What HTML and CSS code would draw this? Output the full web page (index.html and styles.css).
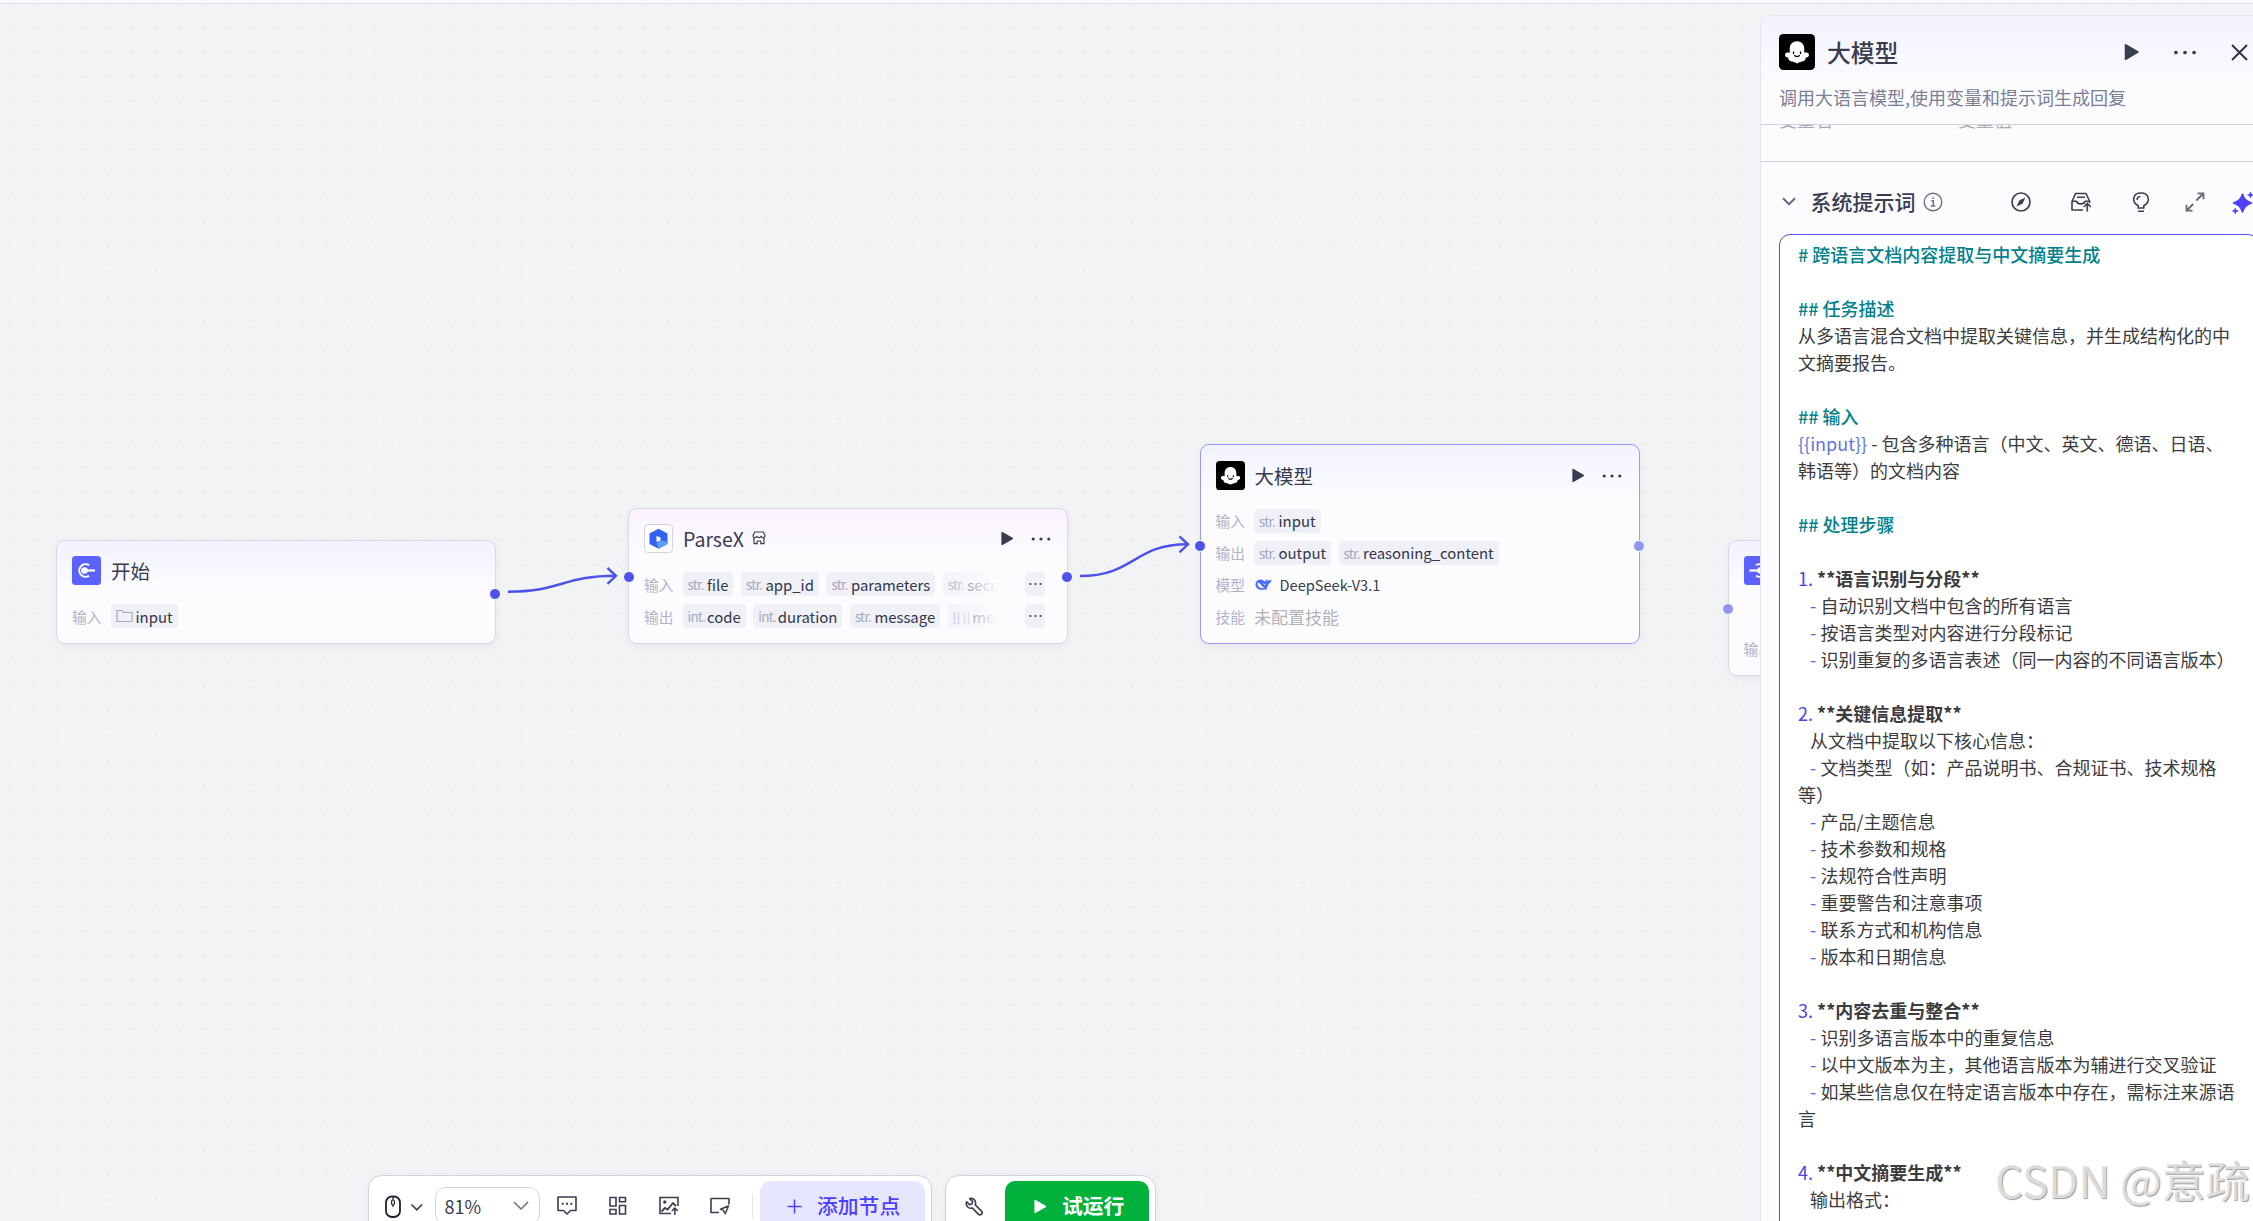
FILE: index.html
```html
<!DOCTYPE html>
<html lang="zh-CN">
<head>
    <meta charset="UTF-8">
    <title>工作流</title>
    <link rel="stylesheet" href="styles.css">
</head>
<body>
    <!-- shared icons -->
    <svg class="icon-defs" width="0" height="0">
        <symbol id="ghost" viewBox="0 0 36 36">
            <rect width="36" height="36" rx="4.5" fill="#000"/>
            <path d="M18 7.300c-4.500 0-7.300 3.300-7.300 7.600v4c-1.500-.6-3.800-.4-4.500 1-.7 1.700.6 3.600 2.900 3.700.2 2.700 1.900 4.200 4.300 3.700.8 1.300 1.600 1 2.600.6.600 1 1.200 1.300 2 1.300s1.400-.3 2-1.300c1 .4 1.800.7 2.600-.6 2.400.5 4.100-1 4.300-3.700 2.300-.1 3.600-2 2.900-3.700-.7-1.400-3-1.600-4.500-1v-4c0-4.300-2.800-7.600-7.300-7.600z" fill="#fff"/>
            <path d="M14.500 18v1.500M21.500 18v1.500M15.700 21.500c1.200 1.600 3.400 1.600 4.600 0" fill="none" stroke="#000" stroke-width="1.300" stroke-linecap="round"/>
        </symbol>
        <symbol id="play" viewBox="0 0 14 16">
            <path d="M1 1.600v12.800c0 .6.600 1 1.200.6l10.800-6.300c.6-.4.6-1 0-1.400L2.200 1C1.600.6 1 1 1 1.600z" fill="currentColor"/>
        </symbol>
        <symbol id="more" viewBox="0 0 20 6">
            <circle cx="2.200" cy="3" r="1.600" fill="currentColor"/>
            <circle cx="10" cy="3" r="1.600" fill="currentColor"/>
            <circle cx="17.800" cy="3" r="1.600" fill="currentColor"/>
        </symbol>
    </svg>

    <div class="canvas">
        <svg class="lines" width="1760" height="1221">
            <path d="M508 591.700C562 591.700 562 575.800 616 575.800"/>
            <path d="M607.500 568l8.500 7.800l-8.500 8"/>
            <path d="M1080 576C1134 576 1134 544.300 1187.500 544.300"/>
            <path d="M1179.500 536.300l8.500 8l-8.500 8"/>
        </svg>

        <div class="node start-node">
            <div class="node-head">
                <svg class="node-icon" viewBox="0 0 29 29">
                    <rect width="29" height="29" rx="3.500" fill="#5c62ff"/>
                    <path d="M17 9.200a6.300 6.300 0 1 0 0 10.600" fill="none" stroke="#fff" stroke-width="2"/>
                    <circle cx="12.500" cy="14.500" r="3.300" fill="#fff"/>
                    <path d="M12 14.500h11" stroke="#fff" stroke-width="2.200"/>
                </svg>
                <span class="node-title">开始</span>
            </div>
            <div class="row">
                <span class="label">输入</span>
                <span class="chip">
                    <svg class="folder" viewBox="0 0 17 14"><path d="M1 12.500V1.500h5l1.500 2H16v9z" fill="none" stroke="#a5a9c0" stroke-width="1.200"/></svg>input
                </span>
            </div>
            <i class="port out"></i>
        </div>

        <div class="node plugin-node">
            <div class="node-head">
                <svg class="node-icon" viewBox="0 0 29 29">
                    <rect x=".5" y=".5" width="28" height="28" rx="3.500" fill="#fff" stroke="#cfd4e6"/>
                    <path d="M14.500 4.800l9 4.700v10.500l-9 4.700l-9-4.700V9.500z" fill="#2f62f5"/>
                    <path d="M14.500 24.700l-2-5.200 4-3.200 7 1.500v2.200z" fill="#5b9ff8"/>
                    <path d="M12.500 12l4 1.500v3l-4 1.500z" fill="#fff"/>
                </svg>
                <span class="node-title">ParseX</span>
                <svg class="store" viewBox="0 0 14 14"><path d="M2.700 1h8.600L13 4.800c0 2.200-3 2.400-4 .5-.8 1.700-3.200 1.700-4 0-1 1.900-4 1.700-4-.5zM2 7v5.700h3.200V10h3.600v2.700H12V7" fill="none" stroke="#3a3f50" stroke-width="1.200" stroke-linejoin="round"/></svg>
                <span class="tools">
                    <svg class="play"><use href="#play"/></svg>
                    <svg class="more"><use href="#more"/></svg>
                </span>
            </div>
            <div class="row">
                <span class="label">输入</span>
                <span class="chip"><em>str.</em>file</span>
                <span class="chip"><em>str.</em>app_id</span>
                <span class="chip"><em>str.</em>parameters</span>
                <span class="chip"><em>str.</em>secret_code</span>
                <span class="fade"><b><svg><use href="#more"/></svg></b></span>
            </div>
            <div class="row">
                <span class="label">输出</span>
                <span class="chip"><em>int.</em>code</span>
                <span class="chip"><em>int.</em>duration</span>
                <span class="chip"><em>str.</em>message</span>
                <span class="chip"><em class="obj">[{ }]</em>metrics</span>
                <span class="fade"><b><svg><use href="#more"/></svg></b></span>
            </div>
            <i class="port in"></i>
            <i class="port out"></i>
        </div>

        <div class="node llm-node">
            <div class="node-head">
                <svg class="node-icon"><use href="#ghost"/></svg>
                <span class="node-title">大模型</span>
                <span class="tools">
                    <svg class="play"><use href="#play"/></svg>
                    <svg class="more"><use href="#more"/></svg>
                </span>
            </div>
            <div class="row">
                <span class="label">输入</span>
                <span class="chip"><em>str.</em>input</span>
            </div>
            <div class="row">
                <span class="label">输出</span>
                <span class="chip"><em>str.</em>output</span>
                <span class="chip"><em>str.</em>reasoning_content</span>
            </div>
            <div class="row">
                <span class="label">模型</span>
                <svg class="whale" viewBox="0 0 17 13">
                    <path d="M.5 6C.8 2.800 3.500 1 6.200 1.500c1.700.3 2.600 1.300 4.200 2.300.5-.5.3-1.700.4-2.800.8.3 1 1.200 1.700 1.500 1.200.3 2.600-.1 3.900-.9.100 2-1 3.800-3 4.300-.1 2-1 3.600-2.300 4.600l1.200 1c-1 .6-2 .3-2.800-.2C5.500 13 .2 11 .5 6z" fill="#4d6bfe"/>
                    <path d="M2.800 4.800c2.600.2 3.500 3.700 6 5.200-3.800.6-6.300-1.800-6-5.200zM8 5.500c1.200 0 2.100.9 2.200 2.100" fill="#fbfbff" stroke="#fbfbff" stroke-width=".4"/>
                </svg>
                <span class="model-name">DeepSeek-V3.1</span>
            </div>
            <div class="row">
                <span class="label">技能</span>
                <span class="empty">未配置技能</span>
            </div>
            <i class="port in"></i>
            <i class="port out idle"></i>
        </div>

        <div class="node end-node">
            <div class="node-head">
                <svg class="node-icon" viewBox="0 0 29 29">
                    <rect width="29" height="29" rx="3.500" fill="#5c62ff"/>
                    <path d="M12 9.200a6.300 6.300 0 1 1 0 10.600" fill="none" stroke="#fff" stroke-width="2"/>
                    <circle cx="16.500" cy="14.500" r="3.300" fill="#fff"/>
                    <path d="M5.500 14.500h11" stroke="#fff" stroke-width="2.200"/>
                </svg>
            </div>
            <div class="row"></div>
            <div class="row">
                <span class="label">输出</span>
            </div>
            <i class="port in idle"></i>
        </div>
    </div>

    <div class="toolbar">
        <div class="bar main-bar">
            <svg class="mouse" viewBox="0 0 39 24" width="39" height="24">
                <rect x="1" y="1.500" width="14" height="20.500" rx="6" fill="none" stroke="#1f2430" stroke-width="1.800"/>
                <path d="M8 2v3M8 10v2" stroke="#1f2430" stroke-width="1.200"/>
                <rect x="6.600" y="5" width="2.800" height="5" rx="1.400" fill="#fff" stroke="#1f2430" stroke-width="1.200"/>
                <path d="M26.500 9.500l5.300 5.300l5.300-5.300" fill="none" stroke="#3a3f50" stroke-width="1.700"/>
            </svg>
            <div class="zoom-select">
                <span>81%</span>
                <svg width="16" height="10" viewBox="0 0 16 10"><path d="M1 1l7 7l7-7" fill="none" stroke="#6b7087" stroke-width="1.500"/></svg>
            </div>
            <svg class="bar-icon" viewBox="0 0 20 20">
                <path d="M1 1h18v13.500h-5.500L10 18l-3.500-3.500H1z" fill="none" stroke="#3a3f50" stroke-width="1.600" stroke-linejoin="round"/>
                <path d="M4.700 6.700h2v2h-2zM9 6.700h2v2H9zM13.300 6.700h2v2h-2z" fill="#3a3f50"/>
            </svg>
            <svg class="bar-icon" viewBox="0 0 20 20">
                <path d="M2 1.500h6v8.500H2zM11.500 1.500h6v4.300h-6zM2 13.500h6V18H2zM11.500 9.500h6V18h-6z" fill="none" stroke="#3a3f50" stroke-width="1.600"/>
            </svg>
            <svg class="bar-icon" viewBox="0 0 20 20">
                <path d="M12 17.500H1V1.500h18V10" fill="none" stroke="#3a3f50" stroke-width="1.600"/>
                <circle cx="5.800" cy="6" r="1.700" fill="#3a3f50"/>
                <path d="M2.500 15.500l3.500-3.500 2.500 1.500 5.500-6.500 3 3" fill="none" stroke="#3a3f50" stroke-width="1.800"/>
                <path d="M15.800 19v-6.500M12.800 15l3-3 3 3" fill="none" stroke="#3a3f50" stroke-width="1.500"/>
            </svg>
            <svg class="bar-icon" viewBox="0 0 20 20">
                <path d="M9 16.500H1V2.500h18v6" fill="none" stroke="#3a3f50" stroke-width="1.600" stroke-linejoin="round"/>
                <path d="M18.500 10l-8 3.200 3 1.500 1.700 3z" fill="none" stroke="#3a3f50" stroke-width="1.500" stroke-linejoin="round"/>
            </svg>
            <span class="split"></span>
            <div class="add-btn">
                <svg width="15" height="15" viewBox="0 0 15 15"><path d="M7.500 0.500v14M0.500 7.500h14" stroke="#4d40ff" stroke-width="1.500"/></svg>
                <span>添加节点</span>
            </div>
        </div>
        <div class="bar run-bar">
            <svg class="wrench" viewBox="0 0 20 20">
                <path d="M5 1.700l3 3-.7 2.600-2.600.7-3-3c-1.500 4 2 7.800 5.800 6.500l7 7c2 1.200 4.500-1.200 3.300-3.200l-7-7C12.200 4.200 9 .5 5 1.700z" fill="none" stroke="#3a3f50" stroke-width="1.700" stroke-linejoin="round"/>
            </svg>
            <div class="run-btn">
                <svg class="play"><use href="#play"/></svg>
                <span>试运行</span>
            </div>
        </div>
    </div>

    <div class="panel">
        <div class="panel-head">
            <div class="panel-title">
                <svg class="panel-logo"><use href="#ghost"/></svg>
                <span>大模型</span>
                <svg class="panel-play"><use href="#play"/></svg>
                <svg class="panel-more"><use href="#more"/></svg>
                <svg class="close" viewBox="0 0 17 17"><path d="M1 1l15 15M16 1L1 16" stroke="#2e3241" stroke-width="1.900"/></svg>
            </div>
            <div class="panel-desc">调用大语言模型,使用变量和提示词生成回复</div>
        </div>
        <div class="vars">
            <span>变量名</span>
            <span>变量值</span>
        </div>
        <div class="section-head">
            <svg class="arrow" viewBox="0 0 14 9"><path d="M1 1.200l6 6l6-6" fill="none" stroke="#6b7087" stroke-width="2.200"/></svg>
            <span class="section-title">系统提示词</span>
            <svg class="s-icon info" viewBox="0 0 20 20">
                <circle cx="10" cy="10" r="8.800" fill="none" stroke="#6b7087" stroke-width="1.400"/>
                <path d="M8.300 8.800h2v5M7.800 14h4.500M10.200 5.300v1.800" fill="none" stroke="#6b7087" stroke-width="1.400"/>
            </svg>
            <div class="section-tools">
                <svg class="s-icon" viewBox="0 0 20 20">
                    <circle cx="10" cy="10" r="9" fill="none" stroke="#3a3f50" stroke-width="1.700"/>
                    <path d="M14.500 5.500l-3 6.200-6 2.800 3-6.200z" fill="#3a3f50"/>
                </svg>
                <svg class="s-icon" viewBox="0 0 20 20">
                    <path d="M12 18H1V9.500L4.500 1.500h10.500l3.700 8v1.500M1.200 9.200h4.300c1.200 3.600 7.500 3.600 8.700 0h4.500M6 5.200h8" fill="none" stroke="#3a3f50" stroke-width="1.600" stroke-linejoin="round"/>
                    <path d="M16.300 19.500v-7.500M12.800 15l3.500-3.500 3.500 3.500" fill="none" stroke="#3a3f50" stroke-width="1.600"/>
                </svg>
                <svg class="s-icon" viewBox="0 0 20 20">
                    <path d="M7.200 16v-2.200C.2 10 1.500 1 10 1s9.800 9 2.800 12.800V16zM7 19.200h6" fill="none" stroke="#3a3f50" stroke-width="1.600"/>
                    <path d="M6 8C6.100 6 7.300 4.700 9.300 4.400" fill="none" stroke="#3a3f50" stroke-width="1.400"/>
                </svg>
                <svg class="s-icon" viewBox="0 0 20 20">
                    <path d="M12.500 1.300h6v6M18.300 1.500l-7 7M7.500 18.700h-6v-6M1.700 18.500l6.500-6.500" fill="none" stroke="#66696f" stroke-width="1.800"/>
                </svg>
                <svg class="sparkle" viewBox="0 0 22 22">
                    <path d="M10.500 2c1.500 5 3.500 7 9 9-5.500 2-7.500 4-9 9-1.500-5-3.500-7-9-9 5.500-2 7.500-4 9-9z" fill="#4d40ff" stroke="#4d40ff" stroke-width="1.500" stroke-linejoin="round"/>
                    <path d="M18.500 0l.9 2.100 2.100.9-2.100.9-.9 2.100-.9-2.100-2.100-.9 2.100-.9zM3.300 16l.9 2.100 2.100.9-2.100.9-.9 2.100-.9-2.100-2.100-.9 2.100-.9z" fill="#4d40ff" stroke="#4d40ff" stroke-width=".5"/>
                </svg>
            </div>
        </div>
        <div class="editor"><span class="h"># 跨语言文档内容提取与中文摘要生成</span>

<span class="h">## 任务描述</span>
从多语言混合文档中提取关键信息，并生成结构化的中
文摘要报告。

<span class="h">## 输入</span>
<span class="var">{{input}}</span> - 包含多种语言（中文、英文、德语、日语、
韩语等）的文档内容

<span class="h">## 处理步骤</span>

<span class="num">1.</span> <b>**语言识别与分段**</b>
   <span class="dash">-</span> 自动识别文档中包含的所有语言
   <span class="dash">-</span> 按语言类型对内容进行分段标记
   <span class="dash">-</span> 识别重复的多语言表述（同一内容的不同语言版本）

<span class="num">2.</span> <b>**关键信息提取**</b>
   从文档中提取以下核心信息：
   <span class="dash">-</span> 文档类型（如：产品说明书、合规证书、技术规格
等）
   <span class="dash">-</span> 产品/主题信息
   <span class="dash">-</span> 技术参数和规格
   <span class="dash">-</span> 法规符合性声明
   <span class="dash">-</span> 重要警告和注意事项
   <span class="dash">-</span> 联系方式和机构信息
   <span class="dash">-</span> 版本和日期信息

<span class="num">3.</span> <b>**内容去重与整合**</b>
   <span class="dash">-</span> 识别多语言版本中的重复信息
   <span class="dash">-</span> 以中文版本为主，其他语言版本为辅进行交叉验证
   <span class="dash">-</span> 如某些信息仅在特定语言版本中存在，需标注来源语
言

<span class="num">4.</span> <b>**中文摘要生成**</b>
   输出格式：
</div>
    </div>

    <div class="watermark">CSDN @意疏</div>
</body>
</html>
```
FILE: styles.css
```css
* {
    box-sizing: border-box;
}

body {
    margin: 0;
    width: 2253px;
    height: 1221px;
    overflow: hidden;
    position: relative;
    font-family: "Noto Sans CJK SC", sans-serif;
    color: #383c4e;
    background-color: #f2f3f5;
}

.icon-defs {
    position: absolute;
}

/* canvas */
.canvas {
    position: absolute;
    left: 0;
    top: 0;
    width: 2253px;
    height: 1221px;
    background-color: #f2f3f5;
    background-image: radial-gradient(circle, #ebecef 1.2px, transparent 1.7px);
    background-size: 24.43px 24.43px;
    background-position: -2.9px -11.9px;
    border-top: 3px solid #f7f7fc;
    box-shadow: inset 0 1px 0 #e0e0ec;
}

.lines {
    position: absolute;
    left: 0;
    top: -3px;
    fill: none;
    stroke: #4d53e8;
    stroke-width: 2.4;
    stroke-linecap: butt;
}

.node {
    position: absolute;
    width: 440px;
    padding: 14px 15px 0;
    border: 1px solid #d5d8e8;
    border-radius: 9px;
    background: linear-gradient(#f2f2ff, #fcfcff 52px);
    box-shadow: 0 3px 8px rgba(0, 0, 0, 0.05);
}

.start-node {
    left: 56px;
    top: 537px;
    height: 104px;
}

.plugin-node {
    left: 628px;
    top: 505px;
    height: 136px;
    background: linear-gradient(#fbf2ff, #fcfcff 48px);
}

.llm-node {
    left: 1199.5px;
    top: 441px;
    height: 200px;
    padding-top: 15px;
    border-color: #9a98f8;
}

.end-node {
    left: 1727.5px;
    top: 537px;
    height: 136px;
}

.node-head {
    display: flex;
    align-items: center;
    height: 30px;
    margin-bottom: 19px;
}

.llm-node .node-head {
    margin-bottom: 18.5px;
}

.node-icon {
    width: 29px;
    height: 29px;
    margin-right: 10px;
}

.node-title {
    font-size: 19.5px;
    line-height: 30px;
    padding-top: 2px;
}

.store {
    width: 14px;
    height: 14px;
    margin-left: 8.5px;
    margin-bottom: 1px;
}

.tools {
    display: flex;
    align-items: center;
    gap: 17px;
    margin-left: auto;
    margin-right: 1.5px;
    padding-top: 1px;
}

.tools .play {
    width: 14px;
    height: 15px;
}

.tools .more {
    width: 20px;
    height: 6px;
}

.row {
    position: relative;
    display: flex;
    align-items: center;
    height: 24px;
    margin-bottom: 8px;
    gap: 7.5px;
    overflow: hidden;
    white-space: nowrap;
    font-size: 14.7px;
}

.label {
    width: 31px;
    flex-shrink: 0;
    color: #b0b3c9;
}

.chip {
    display: flex;
    align-items: center;
    flex-shrink: 0;
    height: 24px;
    padding: 0 5px;
    border-radius: 4px;
    background-color: #f0f0f7;
    color: #32364a;
    font-size: 14.9px;
}

.chip em {
    width: 19.5px;
    font-style: normal;
    font-size: 13.5px;
    letter-spacing: -0.8px;
    color: #a5a9c0;
}

.chip .obj {
    font-size: 12px;
    letter-spacing: -0.3px;
}

.folder {
    width: 17px;
    height: 14px;
    margin-right: 3px;
}

.fade {
    position: absolute;
    right: 0;
    top: 0;
    width: 120px;
    height: 24px;
    padding-left: 93px;
    background: linear-gradient(90deg, rgba(252, 252, 255, 0), #fcfcff 66px);
}

.fade b {
    display: flex;
    align-items: center;
    justify-content: center;
    width: 20px;
    height: 24px;
    border-radius: 4px;
    background-color: #f0f0f7;
}

.fade svg {
    width: 13px;
    height: 4px;
}

.whale {
    width: 17px;
    height: 13px;
    margin-left: 1px;
}

.model-name {
    font-size: 14.6px;
    color: #383c50;
}

.empty {
    font-size: 17px;
    color: #b2b3b8;
}

.port {
    position: absolute;
    width: 12px;
    height: 12px;
    border: 1px solid #fff;
    border-radius: 50%;
    background-color: #4d53e8;
}

.port.idle {
    background-color: #9095f2;
}

.port.in {
    left: -6.5px;
}

.port.out {
    right: -6px;
}

.start-node .port {
    top: 47px;
}

.plugin-node .port {
    top: 62px;
}

.llm-node .port {
    top: 95px;
}

.end-node .port {
    top: 62px;
}

/* bottom toolbar */
.toolbar {
    position: absolute;
    left: 368px;
    top: 1175px;
    display: flex;
    gap: 12.5px;
}

.bar {
    display: flex;
    align-items: center;
    height: 62px;
    border: 1px solid #d3d3e6;
    border-radius: 14px;
    background-color: #fff;
    box-shadow: 0 2px 8px rgba(0, 0, 0, 0.05);
}

.main-bar {
    width: 564px;
    padding: 0 6px 0 15.5px;
}

.mouse {
    flex-shrink: 0;
    margin-top: 1px;
}

.zoom-select {
    display: flex;
    align-items: center;
    justify-content: space-between;
    flex-shrink: 0;
    width: 105px;
    height: 38px;
    margin-left: 11px;
    margin-right: 17px;
    padding: 0 10px 0 9px;
    border: 1px solid #d3d3e6;
    border-radius: 11px;
    font-size: 18px;
}

.bar-icon {
    width: 20px;
    height: 20px;
    flex-shrink: 0;
    margin-right: 31px;
}

.split {
    width: 1px;
    height: 24px;
    margin-left: -9px;
    background-color: #e6e6ef;
}

.add-btn {
    display: flex;
    align-items: center;
    gap: 15px;
    flex-shrink: 0;
    width: 165px;
    height: 50px;
    margin-left: auto;
    padding-left: 27px;
    border-radius: 11px;
    background-color: #e6e7ff;
    color: #4d40ff;
    font-size: 20.8px;
    font-weight: 500;
}

.add-btn span,
.run-btn span {
    margin-top: -2px;
}

.run-bar {
    width: 211px;
    padding: 0 5.5px 0 19.5px;
}

.wrench {
    width: 19px;
    height: 19px;
}

.run-btn {
    display: flex;
    align-items: center;
    gap: 15px;
    width: 144px;
    height: 50px;
    margin-left: auto;
    padding-left: 28px;
    border-radius: 10px;
    background-color: #00b23c;
    color: #fff;
    font-size: 20.8px;
    font-weight: bold;
}

.run-btn .play {
    width: 14px;
    height: 15px;
}

/* right panel */
.panel {
    position: absolute;
    left: 1760px;
    top: 15px;
    width: 514px;
    height: 1240px;
    border: 1px solid #e3e4f2;
    border-radius: 10px;
    background-color: #fcfcff;
}

.panel-head {
    height: 109px;
    padding: 17px 18px 0;
    border-bottom: 1px solid #cfd0e2;
    border-radius: 10px 10px 0 0;
    background: linear-gradient(#f2f2ff, #fcfcff 70px);
}

.panel-title {
    display: flex;
    align-items: center;
    height: 37px;
    font-size: 23.8px;
    font-weight: 500;
}

.panel-logo {
    width: 36px;
    height: 36px;
    margin-right: 12px;
}

.panel-play {
    width: 17px;
    height: 18px;
    margin-left: 225px;
    margin-top: 1px;
}

.panel-more {
    width: 24px;
    height: 7px;
    margin-left: 33px;
    margin-top: 1px;
}

.close {
    width: 17px;
    height: 17px;
    margin-left: 34px;
    margin-top: 1px;
}

.panel-desc {
    margin-top: 14px;
    font-size: 18px;
    line-height: 26px;
    color: #7a7f96;
}

.vars {
    display: flex;
    height: 37px;
    padding-left: 18px;
    border-bottom: 1px solid #cfd0e2;
    overflow: hidden;
    font-size: 18px;
    line-height: 26px;
    color: #a9aab0;
}

.vars span {
    width: 179px;
    margin-top: -19px;
}

.section-head {
    display: flex;
    align-items: center;
    height: 72px;
    padding-left: 21px;
    padding-top: 7px;
}

.arrow {
    width: 14px;
    height: 9px;
}

.section-title {
    margin-left: 14.5px;
    margin-top: -2px;
    font-size: 21px;
    font-weight: 500;
    line-height: 30px;
}

.s-icon {
    width: 20px;
    height: 20px;
}

.info {
    margin-left: 7px;
}

.section-tools {
    display: flex;
    align-items: center;
    margin-left: 68.5px;
}

.section-tools .s-icon {
    margin-right: 40px;
}

.section-tools .s-icon:nth-child(3) {
    margin-right: 34px;
}

.section-tools .s-icon:nth-child(4) {
    margin-right: 27px;
}

.sparkle {
    width: 22px;
    height: 22px;
    margin-top: 2px;
}

.editor {
    width: 480px;
    height: 1040px;
    margin-left: 18px;
    padding: 6px 18px;
    border: 1px solid #4d53e8;
    border-radius: 11px;
    background-color: #fff;
    font-size: 18px;
    line-height: 27px;
    white-space: pre;
    color: #3c3c40;
}

.editor .h {
    color: #00818c;
    font-weight: 500;
}

.editor .var {
    color: #6675d9;
}

.editor .num {
    color: #4e40e5;
}

.editor .dash {
    color: #6a5cf0;
}

.watermark {
    position: absolute;
    left: 1995px;
    top: 1147px;
    font-size: 44px;
    line-height: 64px;
    white-space: nowrap;
    color: rgba(228, 228, 230, 0.9);
    text-shadow: 1px 1px 1px #999;
}
```
